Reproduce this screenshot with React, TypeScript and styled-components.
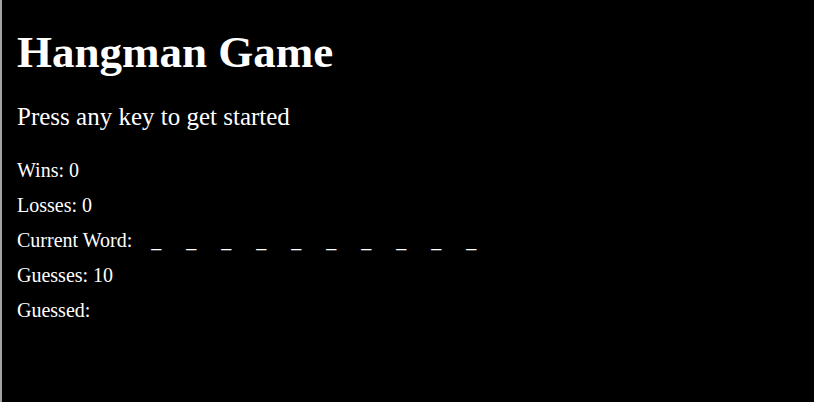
import React from 'react';
import styled, { createGlobalStyle } from 'styled-components';

const GlobalStyle = createGlobalStyle`
  html, body {
    margin: 0;
    padding: 0;
    background: #000;
  }
`;

const Page = styled.div`
  min-height: 100vh;
  box-sizing: border-box;
  border-left: 2px solid #a3a3a3;
  padding: 26px 0 0 15px;
  background: #000;
  color: #fff;
  font-family: "Liberation Serif", "Times New Roman", serif;
`;

const Title = styled.h1`
  margin: 0;
  font-size: 45px;
  line-height: 52px;
  font-weight: 700;
`;

const Subtitle = styled.p`
  margin: 24px 0 0 0;
  font-size: 25px;
  line-height: 29px;
`;

const Stats = styled.div`
  margin-top: 22px;
  display: flex;
  flex-direction: column;
`;

const StatRow = styled.div`
  display: flex;
  align-items: baseline;
  font-size: 20px;
  line-height: 35px;
`;

const Blanks = styled.span`
  display: flex;
  gap: 25px;
  margin-left: 19px;
`;

const Blank = styled.span`
  width: 10px;
`;

const word = 'hangmangam';

const App: React.FC = () => {
  return (
    <Page>
      <GlobalStyle />
      <Title>Hangman Game</Title>
      <Subtitle>Press any key to get started</Subtitle>
      <Stats>
        <StatRow>Wins: 0</StatRow>
        <StatRow>Losses: 0</StatRow>
        <StatRow>
          Current Word:
          <Blanks>
            {word.split('').map((_, i) => (
              <Blank key={i}>_</Blank>
            ))}
          </Blanks>
        </StatRow>
        <StatRow>Guesses: 10</StatRow>
        <StatRow>Guessed:</StatRow>
      </Stats>
    </Page>
  );
};

export default App;
